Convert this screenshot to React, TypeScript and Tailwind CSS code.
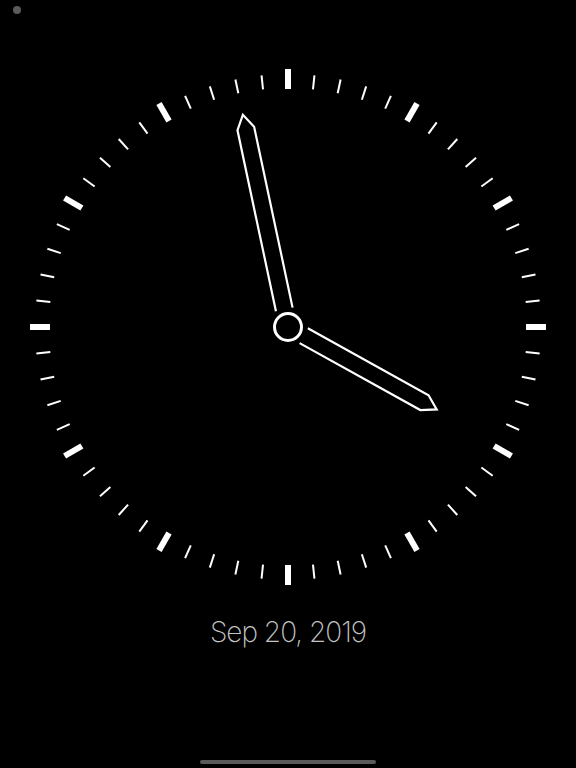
import React from "react";

const C = 260;

function Ticks() {
  const items = [];
  for (let i = 0; i < 60; i++) {
    const major = i % 5 === 0;
    const a = (i * 6 * Math.PI) / 180;
    const r1 = major ? 238 : 239;
    const r2 = major ? 258 : 253;
    const sx = Math.sin(a);
    const sy = -Math.cos(a);
    items.push(
      <line
        key={i}
        x1={C + sx * r1}
        y1={C + sy * r1}
        x2={C + sx * r2}
        y2={C + sy * r2}
        stroke="#ffffff"
        strokeWidth={major ? 6 : 2}
        strokeLinecap="butt"
      />
    );
  }
  return <g>{items}</g>;
}

function Hand({ angle, len }: { angle: number; len: number }) {
  const w = 8.5;
  const pts = [
    [-w, -18],
    [-w, -(len - 14)],
    [0, -len],
    [w, -(len - 14)],
    [w, -18],
  ]
    .map((p) => p.join(","))
    .join(" ");
  return (
    <g transform={`translate(${C} ${C}) rotate(${angle})`}>
      <polyline
        points={pts}
        fill="none"
        stroke="#ffffff"
        strokeWidth={2.2}
        strokeLinejoin="miter"
      />
    </g>
  );
}

export default function App() {
  return (
    <div className="w-full h-[768px] bg-black flex flex-col items-center overflow-hidden">
      <div className="self-start ml-[13px] mt-[6px] w-2 h-2 rounded-full bg-[#5a5a5a]" />
      <svg width={520} height={520} viewBox="0 0 520 520" className="mt-[53px] shrink-0">
        <Ticks />
        <Hand angle={119} len={170} />
        <Hand angle={348} len={217} />
        <circle cx={C} cy={C} r={13.5} fill="none" stroke="#ffffff" strokeWidth={3} />
      </svg>
      <div
        className="mt-[28px] text-[28px] leading-[34px] text-[#c4c4c4] font-extralight tracking-[-1px]"
        style={{ fontFamily: "Inter, 'Liberation Sans', sans-serif" }}
      >
        Sep 20, 2019
      </div>
      <div className="mt-auto mb-[4px] w-[176px] h-[4px] rounded-full bg-[#5a5a5a]" />
    </div>
  );
}
